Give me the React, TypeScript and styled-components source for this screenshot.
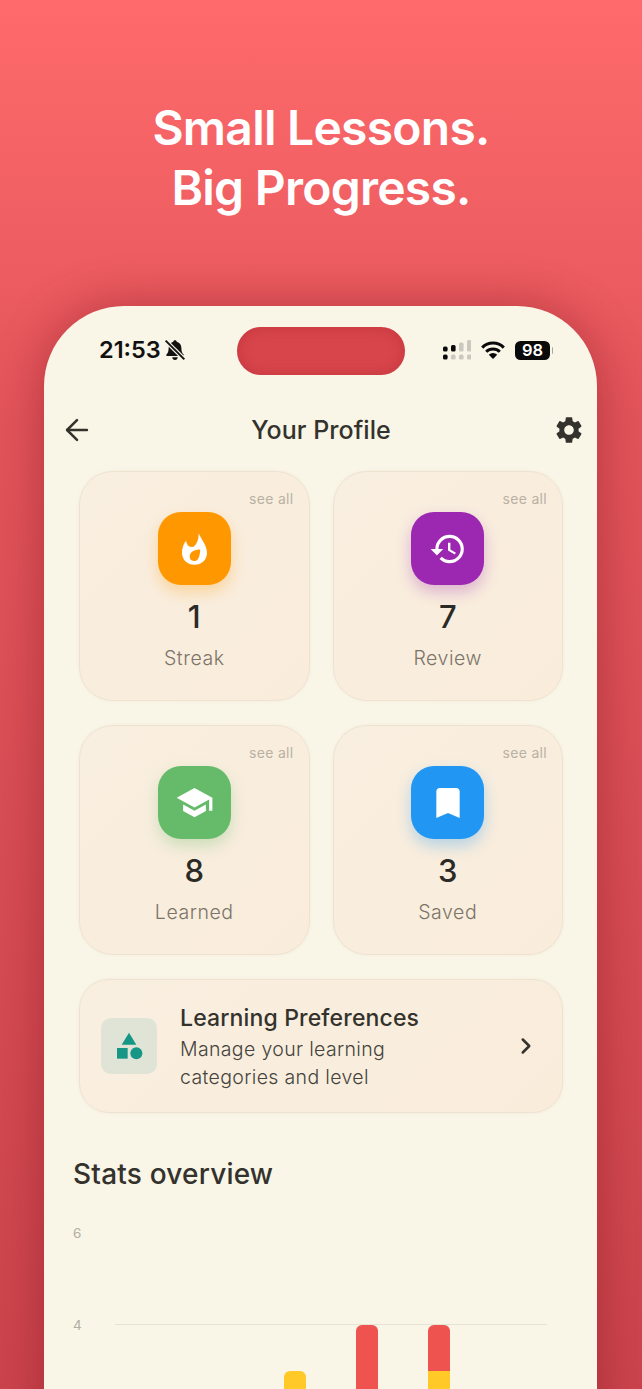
import styled, { createGlobalStyle } from 'styled-components'
import { ArrowLeft, ChevronRight } from 'lucide-react'
import { MdBookmark, MdCategory, MdHistory, MdSchool, MdSettings } from 'react-icons/md'
import type { ReactNode } from 'react'

const GlobalStyle = createGlobalStyle`
  html, body {
    margin: 0;
    padding: 0;
    background: #c83f49;
  }
  * {
    box-sizing: border-box;
  }
`

const Page = styled.div`
  width: 642px;
  height: 1389px;
  overflow: hidden;
  display: flex;
  flex-direction: column;
  font-family: Inter, 'Liberation Sans', sans-serif;
  background: linear-gradient(180deg, #ff6b6c 0%, #e2545a 30%, #cb444d 100%);
`

const Headline = styled.h1`
  margin: 0;
  padding-top: 98px;
  height: 306px;
  flex: none;
  text-align: center;
  color: #fff;
  font-size: 48px;
  line-height: 60px;
  font-weight: 600;
  letter-spacing: -0.75px;
`

const Phone = styled.div`
  flex: none;
  width: 553px;
  height: 1200px;
  margin-left: 44px;
  border-radius: 80px 80px 0 0;
  background: #f9f5e7;
  box-shadow: 0 0 48px rgba(120, 15, 25, 0.42);
`

const StatusBar = styled.div`
  display: grid;
  grid-template-columns: 1fr 168px 1fr;
  align-items: center;
  height: 48px;
  margin-top: 21px;
  padding: 0 44px;
`

const StatusLeft = styled.div`
  display: flex;
  align-items: center;
  gap: 3px;
  padding-left: 11px;
  padding-bottom: 3px;
  color: #111;
  font-size: 23.5px;
  font-weight: 600;
`

const Notch = styled.div`
  height: 48px;
  border-radius: 24px;
  background: #d8464b;
  box-shadow: inset 0 0 14px rgba(165, 30, 40, 0.4);
`

const StatusRight = styled.div`
  display: flex;
  align-items: center;
  justify-content: flex-end;
  gap: 10px;
  padding-bottom: 2px;
`

const Battery = styled.div`
  position: relative;
  width: 35px;
  height: 19px;
  margin-right: 3px;
  border-radius: 5.5px;
  background: #0a0a0a;
  color: #fff;
  font-size: 16.5px;
  font-weight: 600;
  line-height: 19px;
  text-align: center;

  &::after {
    content: '';
    position: absolute;
    top: 6px;
    right: -3px;
    width: 1.5px;
    height: 7px;
    border-radius: 0 2px 2px 0;
    background: #a9a79e;
  }
`

const Header = styled.div`
  display: flex;
  align-items: center;
  justify-content: space-between;
  height: 48px;
  margin-top: 31px;
  padding: 0 12px 0 16px;
  color: #33322c;
`

const Title = styled.div`
  margin-right: 5px;
  font-size: 25px;
  font-weight: 500;
  letter-spacing: 0.05px;
`

const Content = styled.div`
  margin-top: 17px;
  padding: 0 34px 0 35px;
`

const Grid = styled.div`
  display: grid;
  grid-template-columns: 1fr 1fr;
  gap: 24px 23px;
`

const Surface = styled.div`
  border: 1.5px solid #efe2d1;
  background: linear-gradient(135deg, #f9efe0 0%, #f9ecdb 100%);
  box-shadow: 0 0 3px rgba(190, 170, 140, 0.12);
`

const StatCard = styled(Surface)`
  height: 230px;
  border-radius: 34px;
  display: flex;
  flex-direction: column;
  align-items: center;
  padding: 18px 15px 0;
`

const SeeAll = styled.div`
  align-self: flex-end;
  color: #b9b1a4;
  font-size: 14px;
  line-height: 17px;
  letter-spacing: 0.3px;
`

const IconTile = styled.div<{ $color: string; $glow: string }>`
  width: 73px;
  height: 73px;
  margin-top: 5px;
  border-radius: 23px;
  display: flex;
  align-items: center;
  justify-content: center;
  color: #fff;
  background: ${(p) => p.$color};
  box-shadow: 0 7px 15px ${(p) => p.$glow};
`

const StatValue = styled.div`
  margin-top: 14px;
  color: #2b2a27;
  font-size: 31px;
  font-weight: 500;
  line-height: 36px;
`

const StatLabel = styled.div`
  margin-top: 11px;
  color: #7b7468;
  font-size: 19.5px;
  font-weight: 300;
  line-height: 24px;
  letter-spacing: 0.55px;
`

const PrefsCard = styled(Surface)`
  height: 134px;
  margin-top: 24px;
  border-radius: 30px;
  display: flex;
  align-items: center;
  padding: 0 23px 0 21px;
`

const PrefsIcon = styled.div`
  flex: none;
  width: 56px;
  height: 56px;
  border-radius: 10px;
  display: flex;
  align-items: center;
  justify-content: center;
  background: #dfe4d6;
  color: #169684;
`

const PrefsText = styled.div`
  flex: 1;
  margin: 2px 0 0 23px;
`

const PrefsTitle = styled.div`
  color: #33322c;
  font-size: 23px;
  font-weight: 500;
  line-height: 30px;
  letter-spacing: 0.15px;
`

const PrefsBody = styled.div`
  width: 240px;
  margin-top: 2px;
  color: #45433c;
  font-size: 19.5px;
  font-weight: 350;
  line-height: 28px;
  letter-spacing: 0.35px;
`

const ChevronBox = styled.div`
  display: flex;
  color: #33322c;
`

const StatsTitle = styled.h2`
  margin: 43px 0 0 -6px;
  color: #33322c;
  font-size: 28px;
  font-weight: 500;
  line-height: 36px;
  letter-spacing: 0.2px;
`

const ChartSvg = styled.svg`
  display: block;
  margin: 32px 0 0 -35px;
`

const AxisLabel = styled.text`
  fill: #b2aea2;
  font-size: 13.5px;
`

const Flame = () => (
  <svg width="25" height="32" viewBox="0 0 26 33" fill="#fff">
    <path
      fillRule="evenodd"
      d="M17.3 0C21 8 26 13 26 20.5 26 27.8 20.3 33 13 33 5.7 33 0 27.8 0 20.5 0 15.5 1.700 11 4.200 8 5 11.500 6.500 14.500 10 14.500 14 14.500 17.500 8 17.300 0ZM19 17C13 17 8 19.500 8 24.500 8 27.500 10.300 29 12.800 29 16 29 18.500 26 19 17Z"
    />
  </svg>
)

const BellOff = () => (
  <svg width="22" height="22" viewBox="0 0 20 20">
    <path
      fill="#111"
      d="M10 1.200c.9 0 1.500.6 1.600 1.400 2.700.7 4.200 3 4.200 5.800 0 3 .8 4.600 2 5.800.4.500.1 1.200-.5 1.200H2.700c-.6 0-.9-.7-.5-1.200 1.200-1.200 2-2.800 2-5.800 0-2.800 1.500-5.100 4.200-5.800.1-.8.700-1.400 1.600-1.400ZM7.500 16.500h5c0 1.400-1.100 2.500-2.500 2.500s-2.500-1.100-2.500-2.500Z"
    />
    <path stroke="#f9f5e7" strokeWidth="3.800" d="M1.500 1.500 18.500 18.500" />
    <path stroke="#111" strokeWidth="1.800" d="M1.500 1.500 18.500 18.500" />
  </svg>
)

const signalBars = [
  { x: 0, y: 6.6, h: 5, on: true, low: true },
  { x: 8, y: 5, h: 6.6, on: true, low: false },
  { x: 16, y: 2.6, h: 9, on: false, low: false },
  { x: 24, y: 0, h: 11.6, on: false, low: false },
]

const Signal = () => (
  <svg width="28" height="20" viewBox="0 0 28 20">
    {signalBars.map((b) => (
      <g key={b.x}>
        <rect x={b.x} y={b.y} width="4.6" height={b.h} rx="1.6" fill={b.on ? '#0a0a0a' : '#cbc9bf'} />
        <rect x={b.x} y="14.6" width="4.6" height="5" rx="1.6" fill={b.low ? '#0a0a0a' : '#cbc9bf'} />
      </g>
    ))}
  </svg>
)

const Wifi = () => (
  <svg width="24" height="18" viewBox="0 0 24 18" fill="none" stroke="#0a0a0a" strokeWidth="3">
    <path d="M1.200 6.600A15 15 0 0 1 22.800 6.600" />
    <path d="M5.200 10.800A9.600 9.600 0 0 1 18.800 10.800" />
    <path fill="#0a0a0a" stroke="none" d="M12 18 7.800 13.700A6 6 0 0 1 16.200 13.700Z" />
  </svg>
)

const stats: {
  value: number
  label: string
  color: string
  glow: string
  icon: ReactNode
}[] = [
  { value: 1, label: 'Streak', color: '#ff9800', glow: 'rgba(255, 152, 0, 0.3)', icon: <Flame /> },
  { value: 7, label: 'Review', color: '#9c27b0', glow: 'rgba(156, 39, 176, 0.3)', icon: <MdHistory size={38} /> },
  { value: 8, label: 'Learned', color: '#66bb6a', glow: 'rgba(102, 187, 106, 0.3)', icon: <MdSchool size={39} /> },
  { value: 3, label: 'Saved', color: '#2196f3', glow: 'rgba(33, 150, 243, 0.3)', icon: <MdBookmark size={40} /> },
]

const RED = '#ef5350'
const YELLOW = '#ffca28'

export default function App() {
  return (
    <Page>
      <GlobalStyle />
      <Headline>
        Small Lessons.
        <br />
        Big Progress.
      </Headline>
      <Phone>
        <StatusBar>
          <StatusLeft>
            21:53
            <BellOff />
          </StatusLeft>
          <Notch />
          <StatusRight>
            <Signal />
            <Wifi />
            <Battery>98</Battery>
          </StatusRight>
        </StatusBar>
        <Header>
          <ArrowLeft size={34} strokeWidth={1.75} />
          <Title>Your Profile</Title>
          <MdSettings size={32} />
        </Header>
        <Content>
          <Grid>
            {stats.map((s) => (
              <StatCard key={s.label}>
                <SeeAll>see all</SeeAll>
                <IconTile $color={s.color} $glow={s.glow}>
                  {s.icon}
                </IconTile>
                <StatValue>{s.value}</StatValue>
                <StatLabel>{s.label}</StatLabel>
              </StatCard>
            ))}
          </Grid>
          <PrefsCard>
            <PrefsIcon>
              <MdCategory size={32} />
            </PrefsIcon>
            <PrefsText>
              <PrefsTitle>Learning Preferences</PrefsTitle>
              <PrefsBody>Manage your learning categories and level</PrefsBody>
            </PrefsText>
            <ChevronBox>
              <ChevronRight size={26} strokeWidth={2.3} />
            </ChevronBox>
          </PrefsCard>
          <StatsTitle>Stats overview</StatsTitle>
          <ChartSvg width="553" height="190" viewBox="0 0 553 190">
            <AxisLabel x="29" y="14">6</AxisLabel>
            <AxisLabel x="29" y="106">4</AxisLabel>
            <line x1="71" x2="503" y1="100.500" y2="100.500" stroke="#e6e3d5" strokeWidth="1" />
            <path d="M240 190V153a6 6 0 0 1 6-6h10a6 6 0 0 1 6 6v37Z" fill={YELLOW} />
            <path d="M312 190V107a6 6 0 0 1 6-6h10a6 6 0 0 1 6 6v83Z" fill={RED} />
            <path d="M384 147V107a6 6 0 0 1 6-6h10a6 6 0 0 1 6 6v40Z" fill={RED} />
            <rect x="384" y="147" width="22" height="43" fill={YELLOW} />
          </ChartSvg>
        </Content>
      </Phone>
    </Page>
  )
}
